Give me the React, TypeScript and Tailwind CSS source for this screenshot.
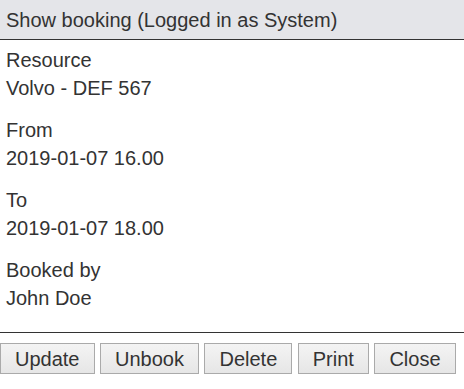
export default function App() {
  const rows = [
    { label: "Resource", value: "Volvo - DEF 567" },
    { label: "From", value: "2019-01-07 16.00" },
    { label: "To", value: "2019-01-07 18.00" },
    { label: "Booked by", value: "John Doe" },
  ];
  const buttons = ["Update", "Unbook", "Delete", "Print", "Close"];

  return (
    <div
      className="w-[464px] h-[389px] bg-white text-[#333] text-[20px]"
      style={{ fontFamily: '"Liberation Sans", Arial, sans-serif' }}
    >
      <div className="h-[40px] bg-[#e4e5e9] border-b border-[#333] px-[6px] flex items-center">
        Show booking (Logged in as System)
      </div>
      <div className="h-[293px] border-b border-[#333] px-[6px] pt-[6px] flex flex-col gap-[14px]">
        {rows.map((r) => (
          <div key={r.label} className="leading-[28px]">
            <div>{r.label}</div>
            <div>{r.value}</div>
          </div>
        ))}
      </div>
      <div className="flex gap-[5.5px] pt-[10px]">
        {buttons.map((b) => (
          <button
            key={b}
            className="h-[31px] px-[14px] border border-[#aaa] bg-gradient-to-b from-[#f4f4f4] to-[#e6e6e6] text-[#333] text-[20px] leading-none"
          >
            {b}
          </button>
        ))}
      </div>
    </div>
  );
}
